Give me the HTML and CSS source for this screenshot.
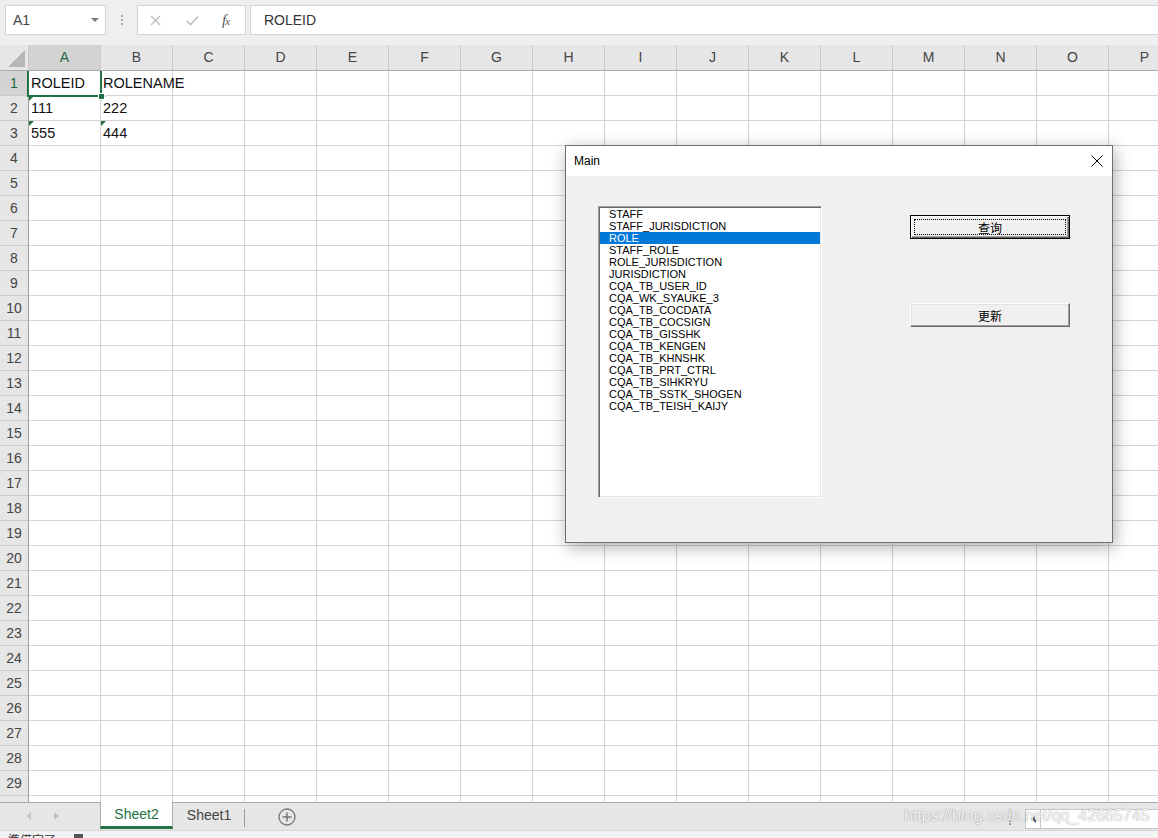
FILE: index.html
```html
<!DOCTYPE html>
<html lang="ja">
<head>
<meta charset="utf-8">
<title>Excel</title>
<link rel="stylesheet" href="styles.css">
</head>
<body>
<div class="app">
  <div class="toolbar">
    <div class="namebox"><span>A1</span><span class="nb-arrow"></span></div>
    <div class="grip"><span></span><span></span><span></span></div>
    <div class="fxbox">
      <svg class="ic-x" width="11" height="11" viewBox="0 0 11 11"><path d="M1 1L10 10M10 1L1 10" stroke="#bdbdbd" stroke-width="1.4" fill="none"/></svg>
      <svg class="ic-ok" width="13" height="11" viewBox="0 0 13 11"><path d="M1 6L4.5 9.5L12 1.5" stroke="#bdbdbd" stroke-width="1.6" fill="none"/></svg>
      <span class="ic-fx">f<small>x</small></span>
    </div>
    <div class="formula">ROLEID</div>
  </div>

  <div class="colheads">
    <div class="corner"><span class="corner-tri"></span></div>
    <div class="ch sel">A</div>
    <div class="ch">B</div>
    <div class="ch">C</div>
    <div class="ch">D</div>
    <div class="ch">E</div>
    <div class="ch">F</div>
    <div class="ch">G</div>
    <div class="ch">H</div>
    <div class="ch">I</div>
    <div class="ch">J</div>
    <div class="ch">K</div>
    <div class="ch">L</div>
    <div class="ch">M</div>
    <div class="ch">N</div>
    <div class="ch">O</div>
    <div class="ch">P</div>
  </div>

  <div class="sheet">
    <div class="rowheads">
      <div class="rh sel">1</div><div class="rh">2</div><div class="rh">3</div><div class="rh">4</div><div class="rh">5</div>
      <div class="rh">6</div><div class="rh">7</div><div class="rh">8</div><div class="rh">9</div><div class="rh">10</div>
      <div class="rh">11</div><div class="rh">12</div><div class="rh">13</div><div class="rh">14</div><div class="rh">15</div>
      <div class="rh">16</div><div class="rh">17</div><div class="rh">18</div><div class="rh">19</div><div class="rh">20</div>
      <div class="rh">21</div><div class="rh">22</div><div class="rh">23</div><div class="rh">24</div><div class="rh">25</div>
      <div class="rh">26</div><div class="rh">27</div><div class="rh">28</div><div class="rh">29</div><div class="rh">30</div>
    </div>
    <div class="cells">
      <div class="c r1 ca">ROLEID</div>
      <div class="c r1 cb">ROLENAME</div>
      <div class="c r2 ca txt">111</div>
      <div class="c r2 cb txt">222</div>
      <div class="c r3 ca txt">555</div>
      <div class="c r3 cb txt">444</div>
      <div class="selbox"><span class="handle"></span></div>
    </div>
  </div>

  <div class="tabbar">
    <div class="tabnav"><span class="tri-l"></span><span class="tri-r"></span></div>
    <div class="tab active">Sheet2</div>
    <div class="tab">Sheet1</div>
    <div class="addsheet">
      <svg width="18" height="18" viewBox="0 0 18 18"><circle cx="9" cy="9" r="8" fill="none" stroke="#767676" stroke-width="1.3"/><path d="M9 4.5V13.5M4.5 9H13.5" stroke="#767676" stroke-width="1.5"/></svg>
    </div>
    <div class="split"></div>
    <div class="hscroll"><span class="hs-left"><span class="tri-l dark"></span></span></div>
  </div>

  <div class="status"><span class="st-text">準備完了</span><span class="st-icon"></span></div>

  <div class="watermark">https://blog.csdn.net/qq_42665745</div>

  <div class="dialog">
    <div class="dlg-title">
      <span>Main</span>
      <svg width="12" height="12" viewBox="0 0 12 12"><path d="M0.5 0.5L11.5 11.5M11.5 0.5L0.5 11.5" stroke="#000" stroke-width="1" fill="none"/></svg>
    </div>
    <div class="dlg-body">
      <div class="listbox">
        <div class="li">STAFF</div>
        <div class="li">STAFF_JURISDICTION</div>
        <div class="li on">ROLE</div>
        <div class="li">STAFF_ROLE</div>
        <div class="li">ROLE_JURISDICTION</div>
        <div class="li">JURISDICTION</div>
        <div class="li">CQA_TB_USER_ID</div>
        <div class="li">CQA_WK_SYAUKE_3</div>
        <div class="li">CQA_TB_COCDATA</div>
        <div class="li">CQA_TB_COCSIGN</div>
        <div class="li">CQA_TB_GISSHK</div>
        <div class="li">CQA_TB_KENGEN</div>
        <div class="li">CQA_TB_KHNSHK</div>
        <div class="li">CQA_TB_PRT_CTRL</div>
        <div class="li">CQA_TB_SIHKRYU</div>
        <div class="li">CQA_TB_SSTK_SHOGEN</div>
        <div class="li">CQA_TB_TEISH_KAIJY</div>
      </div>
      <div class="btncol">
        <div class="btn default">查询</div>
        <div class="btn second">更新</div>
      </div>
    </div>
  </div>
</div>
</body>
</html>
```

FILE: styles.css
```css
* { box-sizing: border-box; margin: 0; padding: 0; }
html, body { width: 1158px; height: 838px; overflow: hidden; }
body { font-family: "Liberation Sans", Arial, sans-serif; background: #fff; color: #000; }

.app { position: relative; width: 1158px; height: 838px; display: flex; flex-direction: column; overflow: hidden; }

/* ---------- formula bar ---------- */
.toolbar { height: 45px; flex: none; background: #efefef; display: flex; align-items: flex-start; padding: 5px 0 0 5px; }
.namebox { width: 101px; height: 30px; background: #fff; border: 1px solid #d4d4d4; display: flex; align-items: center; justify-content: space-between; padding: 0 6px 0 7px; font-size: 14px; color: #444; }
.nb-arrow { width: 0; height: 0; border-left: 4px solid transparent; border-right: 4px solid transparent; border-top: 4px solid #7a7a7a; }
.grip { width: 31px; height: 30px; display: flex; flex-direction: column; align-items: center; justify-content: center; gap: 2px; }
.grip span { width: 2px; height: 2px; background: #a8a8a8; }
.fxbox { width: 109px; height: 30px; background: #fff; border: 1px solid #d4d4d4; display: flex; align-items: center; padding-left: 12px; }
.ic-x { flex: none; }
.ic-ok { flex: none; margin-left: 25px; }
.ic-fx { margin-left: 23px; font-family: "Liberation Serif", serif; font-style: italic; font-size: 15px; color: #555; letter-spacing: -1px; }
.ic-fx small { font-size: 11px; }
.formula { flex: 1; margin-left: 4px; height: 30px; background: #fff; border: 1px solid #d4d4d4; border-right: none; font-size: 14px; color: #333; padding-left: 13px; line-height: 28px; }

/* ---------- column headers ---------- */
.colheads { height: 26px; flex: none; display: flex; background: #e6e6e6; border-bottom: 1px solid #ababab; }
.corner { width: 29px; flex: none; border-right: 1px solid #c8c8c8; position: relative; }
.corner-tri { position: absolute; right: 3px; bottom: 3px; width: 0; height: 0; border-left: 17px solid transparent; border-bottom: 17px solid #b7b7b7; }
.ch { width: 72px; flex: none; border-right: 1px solid #cacaca; text-align: center; font-size: 14px; line-height: 25px; color: #444; }
.ch.sel { background: #d3d3d3; color: #1f6b43; }

/* ---------- sheet body ---------- */
.sheet { height: 731px; flex: none; display: flex; overflow: hidden; }
.rowheads { width: 29px; flex: none; background: #e6e6e6; border-right: 1px solid #9e9e9e; }
.rh { height: 25px; border-bottom: 1px solid #cacaca; text-align: center; font-size: 14px; line-height: 24px; color: #444; }
.rh.sel { background: #d3d3d3; color: #1f6b43; }

.cells {
  flex: 1; position: relative;
  display: grid; grid-template-columns: repeat(16, 72px); grid-template-rows: repeat(3, 25px); align-content: start;
  background-image:
    repeating-linear-gradient(to right, transparent 0 71px, #d4d4d4 71px 72px),
    repeating-linear-gradient(to bottom, transparent 0 24px, #d4d4d4 24px 25px);
}
.c { position: relative; padding-left: 2px; font-size: 14.5px; line-height: 24px; white-space: nowrap; overflow: visible; color: #111; }
.r1 { grid-row: 1; } .r2 { grid-row: 2; } .r3 { grid-row: 3; }
.ca { grid-column: 1; } .cb { grid-column: 2; }
.c.txt::before { content: ""; position: absolute; left: 0; top: 0; width: 0; height: 0; border-top: 5px solid #1e7145; border-right: 5px solid transparent; }

.selbox { position: absolute; left: -2px; top: -2px; width: 75px; height: 28px; border: 2px solid #217346; pointer-events: none; }
.handle { position: absolute; left: 69px; top: 22px; width: 7px; height: 7px; background: #217346; border: 1px solid #fff; }

/* ---------- sheet tabs ---------- */
.tabbar { height: 28px; flex: none; background: #e6e6e6; border-top: 1px solid #ababab; display: flex; align-items: flex-start; }
.tabnav { width: 100px; flex: none; height: 26px; display: flex; align-items: center; padding-left: 26px; gap: 23px; }
.tri-l { width: 0; height: 0; border-top: 4px solid transparent; border-bottom: 4px solid transparent; border-right: 5px solid #c2c2c2; }
.tri-r { width: 0; height: 0; border-top: 4px solid transparent; border-bottom: 4px solid transparent; border-left: 5px solid #c2c2c2; }
.tri-l.dark { border-right-color: #5a5a5a; }
.tab { flex: none; width: 72px; height: 25px; font-size: 14px; line-height: 25px; text-align: center; color: #444; position: relative; }
.tab.active { width: 73px; margin-top: -1px; height: 27px; background: #fff; color: #217346; border-left: 1px solid #ababab; border-right: 1px solid #ababab; border-bottom: 3px solid #217346; line-height: 24px; }
.tab:not(.active)::after { content: ""; position: absolute; right: 0; top: 6px; width: 1px; height: 18px; background: #9a9a9a; }
.addsheet { flex: none; margin-left: 33px; margin-top: 5px; width: 18px; height: 18px; }
.split { flex: none; margin-left: auto; margin-top: 6px; width: 2px; height: 16px; border-left: 2px dotted #9a9a9a; margin-right: 14px; }
.hscroll { flex: none; width: 133px; height: 20px; margin-top: 6px; background: #fff; border: 1px solid #c6c6c6; border-right: none; display: flex; }
.hs-left { width: 15px; height: 100%; border-right: 1px solid #c6c6c6; display: flex; align-items: center; justify-content: center; }

/* ---------- status bar ---------- */
.status { height: 8px; flex: none; background: #f3f3f3; border-top: 1px solid #d6d6d6; overflow: hidden; display: flex; align-items: flex-start; padding-left: 8px; }
.st-text { font-family: "Noto Sans CJK JP", "Liberation Sans", sans-serif; font-size: 12px; line-height: 16px; margin-top: 1px; color: #333; }
.st-icon { width: 9px; height: 8px; margin-left: 18px; margin-top: 3px; background: #555; }

.watermark { position: absolute; left: 904px; top: 807px; font-size: 16px; color: rgba(255,255,255,0.9); text-shadow: 0 0 1px rgba(0,0,0,0.35), 0 0 2px rgba(0,0,0,0.15); white-space: nowrap; pointer-events: none; }

/* ---------- dialog ---------- */
.dialog { position: absolute; left: 565px; top: 145px; width: 548px; height: 398px; border: 1px solid #6f6f6f; background: #f0f0f0; box-shadow: 2px 4px 16px rgba(0,0,0,0.32); display: flex; flex-direction: column; }
.dlg-title { height: 30px; flex: none; background: #fff; display: flex; align-items: center; justify-content: space-between; padding: 0 9px 0 8px; font-size: 12px; color: #000; }
.dlg-body { flex: 1; display: flex; align-items: flex-start; padding: 30px 0 0 32px; }
.listbox { width: 224px; height: 292px; flex: none; background: #fff; border: 1px solid; border-color: #a0a0a0 #fff #fff #a0a0a0; box-shadow: inset 1px 1px 0 #696969, inset -1px -1px 0 #e3e3e3; padding: 1px; }
.li { height: 12px; line-height: 12px; font-size: 11px; padding-left: 9px; white-space: nowrap; color: #000; }
.li.on { background: #0078d7; color: #fff; }
.btncol { margin-left: 88px; padding-top: 9px; display: flex; flex-direction: column; gap: 64px; }
.btn { width: 160px; height: 24px; background: #f0f0f0; display: flex; align-items: center; justify-content: center; position: relative; font-family: "Noto Sans CJK SC", "Liberation Sans", sans-serif; font-size: 12px; color: #000; border: 1px solid; border-color: #fff #696969 #696969 #fff; box-shadow: inset -1px -1px 0 #a0a0a0, inset 1px 1px 0 #e3e3e3; }
.btn.default { border: 1px solid #000; box-shadow: inset 1px 1px 0 #fff, inset -1px -1px 0 #696969, inset -2px -2px 0 #a0a0a0; }
.btn.default::after { content: ""; position: absolute; left: 3px; top: 3px; right: 3px; bottom: 3px; border: 1px dotted #000; }
```
